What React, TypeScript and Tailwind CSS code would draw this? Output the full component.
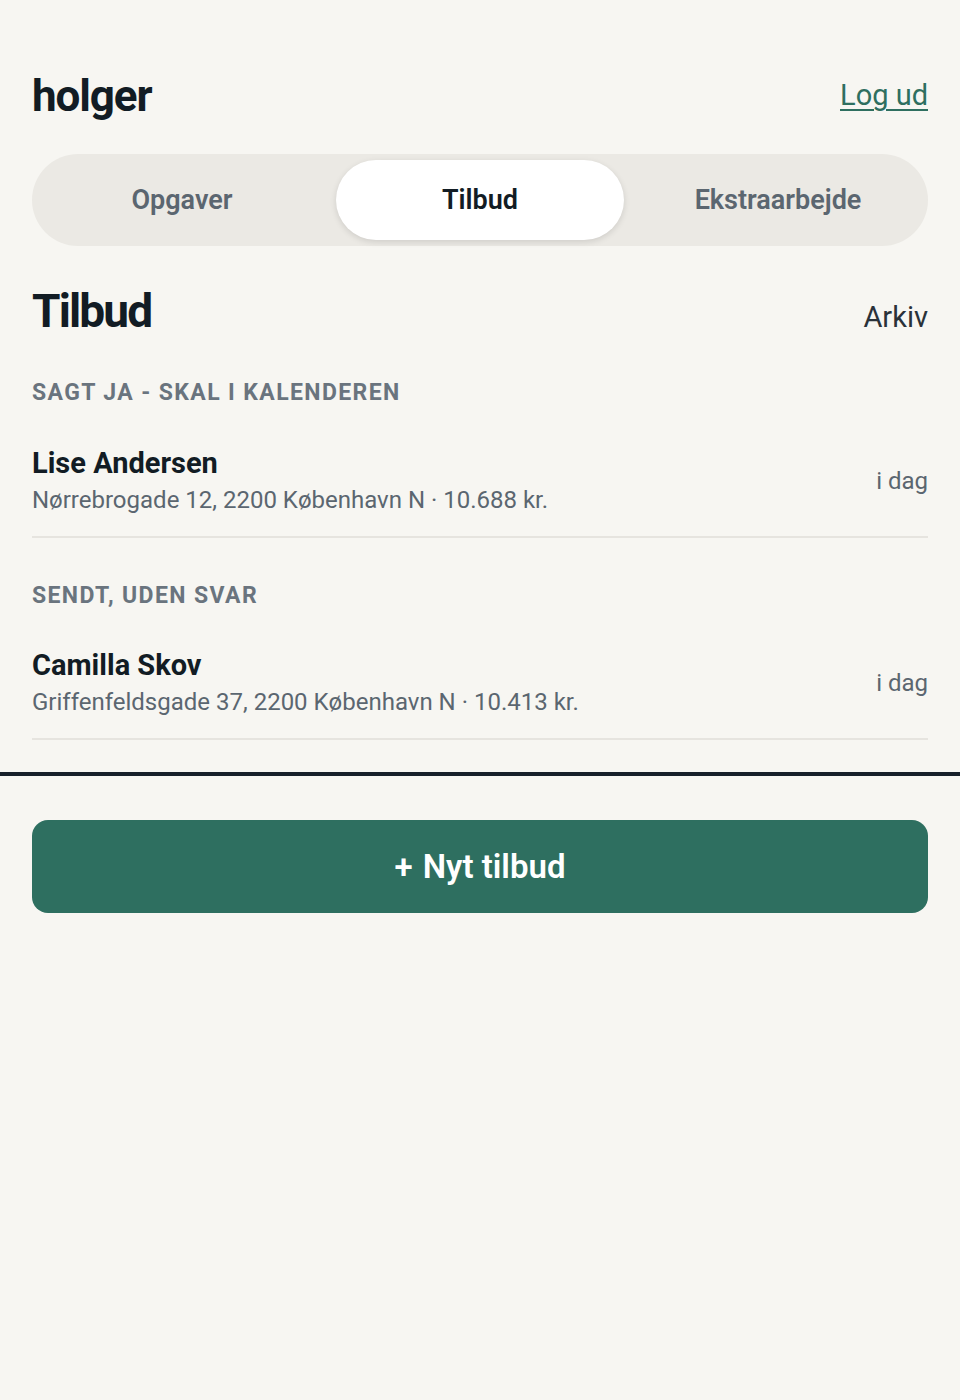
import React from "react";

const font = { fontFamily: '"Roboto", "Liberation Sans", sans-serif' };

const tabs = ["Opgaver", "Tilbud", "Ekstraarbejde"];

const sections = [
  {
    label: "Sagt ja - skal i kalenderen",
    items: [{ name: "Lise Andersen", address: "Nørrebrogade 12, 2200 København N · 10.688 kr.", when: "i dag" }],
  },
  {
    label: "Sendt, uden svar",
    items: [{ name: "Camilla Skov", address: "Griffenfeldsgade 37, 2200 København N · 10.413 kr.", when: "i dag" }],
  },
];

const App = () => {
  return (
    <div className="min-h-[1400px] bg-[#f7f6f2] text-[#121c24]" style={font}>
      <div className="px-8 pt-[66px]">
        <div className="flex items-center justify-between">
          <h1 className="text-[44px] font-bold leading-[60px] tracking-tight">holger</h1>
          <a className="text-[29px] text-[#2e6f60] underline underline-offset-4 decoration-2">Log ud</a>
        </div>

        <div className="mt-[28px] grid grid-cols-3 gap-[10px] rounded-full bg-[#ebe9e4] p-[6px]">
          {tabs.map((t) => (
            <div
              key={t}
              className={
                t === "Tilbud"
                  ? "flex h-[80px] items-center justify-center rounded-full bg-white text-[27px] font-semibold text-[#121c24] shadow-[0_2px_6px_rgba(0,0,0,0.12)]"
                  : "flex h-[80px] items-center justify-center rounded-full text-[27px] font-semibold text-[#5b6670]"
              }
            >
              {t}
            </div>
          ))}
        </div>

        <div className="mt-[39px] flex items-end justify-between">
          <h2 className="text-[46px] font-bold leading-[52px] tracking-[-0.04em]">Tilbud</h2>
          <span className="text-[29px] leading-[40px] text-[#2a323a]">Arkiv</span>
        </div>

        {sections.map((s, i) => (
          <div key={s.label} className={i === 0 ? "mt-[39px]" : "mt-[41px]"}>
            <div className="text-[23px] font-bold uppercase tracking-[0.06em] text-[#6a747e]">{s.label}</div>
            <div className="mt-[33px]">
              {s.items.map((it) => (
                <div key={it.name} className="flex items-center justify-between border-b-2 border-[#e6e4df] pb-[18px]">
                  <div className="flex flex-col">
                    <span className="text-[29px] font-bold leading-[38px]">{it.name}</span>
                    <span className="text-[24px] leading-[36px] text-[#5b6670]">{it.address}</span>
                  </div>
                  <span className="text-[24px] text-[#5b6670]">{it.when}</span>
                </div>
              ))}
            </div>
          </div>
        ))}
      </div>

      <div className="mt-[32px] h-[4px] bg-[#17202a]" />

      <div className="px-8 pt-[44px]">
        <button className="flex h-[93px] w-full items-center justify-center gap-[10px] rounded-2xl bg-[#2e6f60] text-[33px] font-semibold text-white">
          <span>+</span>
          <span>Nyt tilbud</span>
        </button>
      </div>
    </div>
  );
};

export default App;
